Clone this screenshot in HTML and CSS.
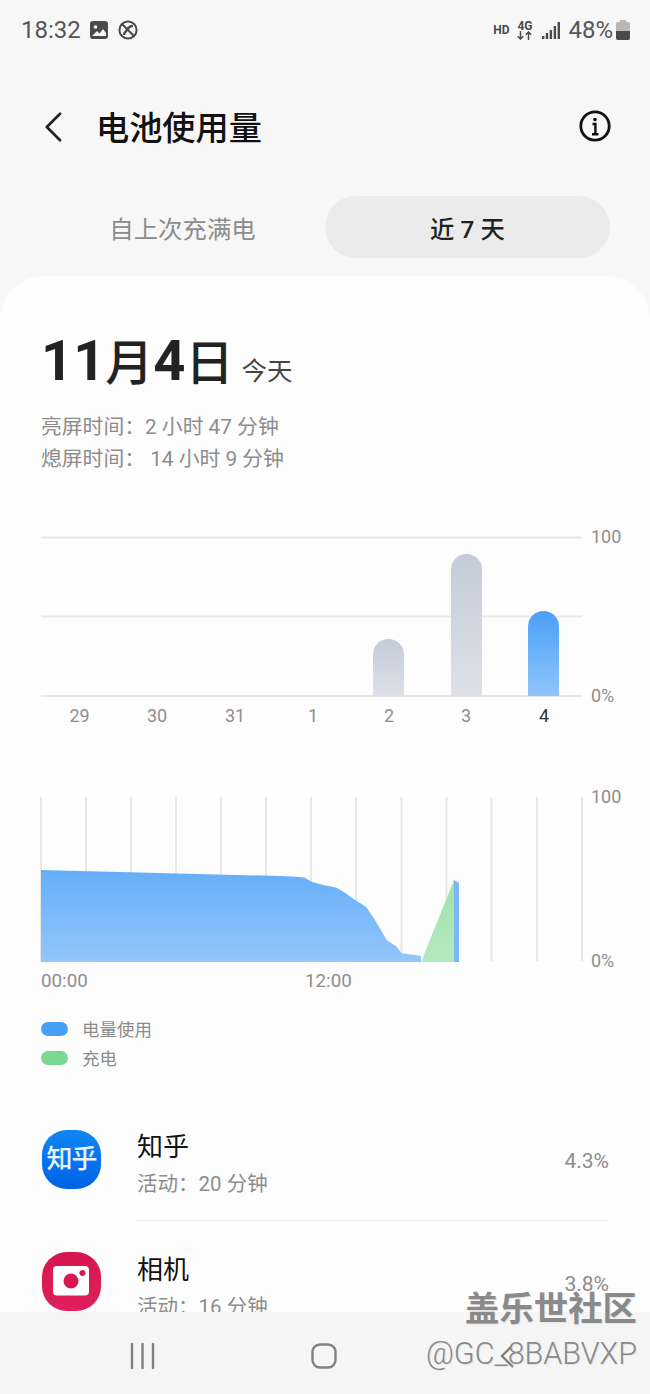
FILE: index.html
```html
<!DOCTYPE html>
<html lang="zh">
<head>
<meta charset="utf-8">
<title>电池使用量</title>
<link rel="stylesheet" href="styles.css">
</head>
<body>
<div class="screen">
  <div class="status">
    <span class="clock">18:32</span>
    <svg class="st-img" viewBox="0 0 18 18"><rect width="18" height="18" rx="3" fill="#4a4a4a"/><circle cx="5.500" cy="6" r="1.800" fill="#f7f7f7"/><path d="M2 15l5-5 2.500 2.500L13 8l3 4v3z" fill="#f7f7f7"/></svg>
    <svg class="st-off" viewBox="0 0 20 20"><circle cx="10" cy="10" r="8.600" fill="none" stroke="#4a4a4a" stroke-width="2"/><path d="M4 4l12 12" stroke="#4a4a4a" stroke-width="2"/><path d="M6 15c0-3 2-3 3-5s3-4 6-4" fill="none" stroke="#4a4a4a" stroke-width="2.400"/></svg>
    <span class="grow"></span>
    <span class="hd">HD</span>
    <span class="net"><span>4G</span><svg viewBox="0 0 15 9"><path d="M3.500 0v8M0.800 5.200l2.700 2.800 2.700-2.800M11.500 9V1M8.800 3.800l2.700-2.800 2.700 2.800" fill="none" stroke="#4a4a4a" stroke-width="1.500"/></svg></span>
    <svg class="signal" viewBox="0 0 18 17"><g fill="#4a4a4a"><rect x="0" y="14" width="2.400" height="3"/><rect x="3.800" y="11" width="2.400" height="6"/><rect x="7.700" y="8" width="2.400" height="9"/><rect x="11.700" y="4" width="2.400" height="13"/><rect x="15.600" y="0" width="2.400" height="17"/></g></svg>
    <span class="pct">48%</span>
    <svg class="battery" viewBox="0 0 14 20"><path d="M4 0h6v2h2a2 2 0 0 1 2 2v14a2 2 0 0 1-2 2H2a2 2 0 0 1-2-2V4a2 2 0 0 1 2-2h2z" fill="#b8b8b8"/><path d="M0 11h14v7a2 2 0 0 1-2 2H2a2 2 0 0 1-2-2z" fill="#4a4a4a"/></svg>
  </div>

  <header class="header">
    <svg class="back" viewBox="0 0 20 34"><path d="M18 2L3 17l15 15" fill="none" stroke="#222" stroke-width="3" stroke-linecap="round" stroke-linejoin="round"/></svg>
    <h1 class="title">电池使用量</h1>
    <svg class="info" viewBox="0 0 32 32"><circle cx="16" cy="16" r="14.200" fill="none" stroke="#111" stroke-width="2.800"/><circle cx="16" cy="9.500" r="1.800" fill="#111"/><path d="M13.500 14h2.900v10M13 24.300h6.500" fill="none" stroke="#111" stroke-width="2.400"/></svg>
  </header>

  <div class="tabs">
    <div class="tab">自上次充满电</div>
    <div class="tab tab-on">近 7 天</div>
  </div>

  <main class="card">
    <div class="date"><b>11</b>月<b>4</b>日<span class="today">今天</span></div>
    <div class="times">
      <div>亮屏时间：2 小时 47 分钟</div>
      <div>熄屏时间： 14 小时 9 分钟</div>
    </div>

    <svg class="chart chart-week" viewBox="0 520 650 210">
      <defs>
        <linearGradient id="grey" x1="0" y1="0" x2="0" y2="1"><stop offset="0" stop-color="#c3ccd9"/><stop offset="1" stop-color="#dde0e7"/></linearGradient>
        <linearGradient id="blue" x1="0" y1="0" x2="0" y2="1"><stop offset="0" stop-color="#4aa0f8"/><stop offset="1" stop-color="#90c5fb"/></linearGradient>
        <linearGradient id="area" gradientUnits="userSpaceOnUse" x1="0" y1="870" x2="0" y2="961"><stop offset="0" stop-color="#65aef8"/><stop offset="1" stop-color="#93c6fb"/></linearGradient>
        <linearGradient id="green" gradientUnits="userSpaceOnUse" x1="0" y1="880" x2="0" y2="961"><stop offset="0" stop-color="#9fe2ac"/><stop offset="1" stop-color="#b6e8bf"/></linearGradient>
      </defs>
      <g class="grid">
        <path d="M41 537.500H582M41 616.500H582M41 696H582"/>
      </g>
      <path d="M373 696V654.500a15.500 15.500 0 0 1 31 0V696z" fill="url(#grey)"/>
      <path d="M451 696V569.500a15.500 15.500 0 0 1 31 0V696z" fill="url(#grey)"/>
      <path d="M528 696V626.500a15.500 15.500 0 0 1 31 0V696z" fill="url(#blue)"/>
      <g class="tick">
        <text x="591" y="543">100</text>
        <text x="591" y="702">0%</text>
      </g>
      <g class="day">
        <text x="79.500" y="722">29</text>
        <text x="157" y="722">30</text>
        <text x="235" y="722">31</text>
        <text x="313" y="722">1</text>
        <text x="389" y="722">2</text>
        <text x="466" y="722">3</text>
        <text x="544" y="722" class="day-on">4</text>
      </g>
    </svg>

    <svg class="chart chart-day" viewBox="0 785 650 210">
      <g class="grid">
        <path d="M41 797V961M86 797V961M131 797V961M176 797V961M221 797V961M266 797V961M311 797V961M356 797V961M401.500 797V961M446.500 797V961M491.500 797V961M537 797V961M582 797V961"/>
      </g>
      <path d="M41 870L280 876L296.700 876.700L305 877.700L311.300 881.700L323.300 885L336.700 887.700L345 892.700L355 900L366 906.700L375 920L386.700 940L396.700 946.700L401.700 953.300L420 955.700L421 955.700V962H41z" fill="url(#area)"/>
      <path d="M421 962L454 880V962z" fill="url(#green)"/>
      <path d="M454 880L459 883V962H454z" fill="#7ab8f5"/>
      <g class="tick">
        <text x="591" y="803">100</text>
        <text x="591" y="967">0%</text>
      </g>
      <g class="time">
        <text x="41" y="987">00:00</text>
        <text x="305" y="987">12:00</text>
      </g>
    </svg>

    <div class="legend">
      <div class="leg-row"><i class="swatch swatch-blue"></i>电量使用</div>
      <div class="leg-row"><i class="swatch swatch-green"></i>充电</div>
    </div>

    <ul class="apps">
      <li class="app">
        <div class="app-icon icon-zhihu">知乎</div>
        <div class="app-body">
          <div class="app-text">
            <div class="app-name">知乎</div>
            <div class="app-sub">活动：20 分钟</div>
          </div>
          <div class="app-pct">4.3%</div>
        </div>
      </li>
      <li class="app">
        <div class="app-icon icon-camera">
          <svg viewBox="0 0 59 59"><rect x="11" y="14" width="36" height="29.500" rx="4" fill="#fff"/><circle cx="29" cy="29" r="7.500" fill="#d8184f"/><circle cx="40.500" cy="21" r="3" fill="#d8184f"/></svg>
        </div>
        <div class="app-body app-body-last">
          <div class="app-text">
            <div class="app-name">相机</div>
            <div class="app-sub">活动：16 分钟</div>
          </div>
          <div class="app-pct">3.8%</div>
        </div>
      </li>
    </ul>
  </main>

  <nav class="nav">
    <svg class="nav-recent" viewBox="0 0 25 26"><path d="M2 0v26M12.500 0v26M23 0v26" stroke="#808080" stroke-width="2.400"/></svg>
    <svg class="nav-home" viewBox="0 0 26 26"><rect x="1.500" y="1.500" width="23" height="23" rx="7.500" fill="none" stroke="#808080" stroke-width="2.400"/></svg>
    <svg class="nav-back" viewBox="0 0 16 26"><path d="M14 2L3 13l11 11" fill="none" stroke="#808080" stroke-width="2.400"/></svg>
  </nav>

  <div class="mark">
    <div class="mark-a">盖乐世社区</div>
    <div class="mark-b">@GC_8BABVXP</div>
  </div>
</div>
</body>
</html>
```
FILE: styles.css
```css
* { box-sizing: border-box; }
html, body { margin: 0; padding: 0; }
body { font-family: Roboto, "Noto Sans CJK SC", sans-serif; background: #f7f7f7; }
.screen { position: relative; width: 650px; height: 1394px; overflow: hidden; background: #f7f7f7; }

.status { display: flex; align-items: center; height: 60px; padding: 0 20px 0 21px; color: #555; }
.clock { font-size: 24px; line-height: 30px; width: 69px; }
.st-img { width: 18px; height: 18px; margin-right: 10px; }
.st-off { width: 20px; height: 20px; }
.grow { flex: 1; }
.hd { font-size: 12px; font-weight: 700; color: #4a4a4a; margin-right: 8px; }
.net { display: flex; flex-direction: column; align-items: center; width: 15px; margin-right: 10px; font-size: 12px; line-height: 10px; font-weight: 700; color: #4a4a4a; }
.net svg { width: 15px; height: 9px; display: block; }
.signal { width: 18px; height: 17px; margin-right: 8px; }
.pct { font-size: 24px; line-height: 30px; margin-right: 3px; }
.battery { width: 14px; height: 20px; }

.header { display: flex; align-items: center; height: 136px; padding: 0 39px 0 44px; }
.back { width: 18px; height: 30px; margin-top: -2px; }
.title { flex: 1; margin: 2px 0 0 34px; font-size: 33.200px; line-height: 44px; font-weight: 500; color: #111; }
.info { width: 32px; height: 32px; margin-top: -4px; }

.tabs { display: grid; grid-template-columns: 1fr 1fr; height: 62px; margin: 0 40px; }
.tab { display: flex; align-items: center; justify-content: center; font-size: 24.400px; color: #8c8c8c; }
.tab-on { background: #ebebeb; border-radius: 31px; color: #222; font-weight: 500; }

.card { height: 1100px; margin-top: 18px; padding-top: 55px; background: #fdfdfd; border-radius: 44px 44px 0 0; }
.date { display: flex; align-items: baseline; height: 60px; padding-left: 41px; font-size: 48px; line-height: 60px; font-weight: 500; color: #222; }
.date b { font-size: 56px; font-weight: 700; }
.today { margin-left: 8px; font-size: 25.500px; line-height: 58px; font-weight: 400; color: #444; }
.times { margin-top: 21px; padding-left: 41px; font-size: 20.800px; line-height: 31.500px; color: #8c8c8c; }

.chart { display: block; width: 650px; height: 210px; }
.chart-week { margin-top: 45px; }
.chart-day { margin-top: 55px; }
.grid path { stroke: #e8e8e8; stroke-width: 2; fill: none; }
.tick text { font-size: 18px; fill: #8e8e8e; }
.time text { font-size: 18.800px; fill: #8e8e8e; }
.day text { font-size: 18px; fill: #8e8e8e; text-anchor: middle; }
.day .day-on { fill: #333; }

.legend { margin-top: 19px; font-size: 17.500px; color: #8c8c8c; }
.leg-row { display: flex; align-items: center; height: 29px; padding-left: 41px; }
.swatch { width: 27px; height: 14px; margin-right: 14px; border-radius: 7px; }
.swatch-blue { background: #46a0f7; }
.swatch-green { background: #7ad98f; }

.apps { list-style: none; margin: 26px 0 0; padding: 0; }
.app { display: flex; padding-left: 42px; }
.app-icon { flex: none; width: 59px; height: 59px; margin: 32px 36px 0 0; border-radius: 42%; }
.app + .app .app-icon { margin-top: 31px; }
.icon-zhihu { display: flex; align-items: center; justify-content: center; background: linear-gradient(#0f86f5, #0062e6); color: #e8f3ff; font-size: 26px; line-height: 59px; letter-spacing: -1px; font-weight: 500; }
.icon-camera { background: linear-gradient(#d5174d, #e01f5c); }
.icon-camera svg { display: block; width: 59px; height: 59px; }
.app-body { flex: 1; display: flex; align-items: center; justify-content: space-between; margin-right: 41px; padding: 31px 0 17px; border-bottom: 1px solid #ececec; }
.app-body-last { border-bottom: 0; }
.app-name { font-size: 26px; line-height: 36px; color: #111; }
.app-sub { font-size: 20.500px; line-height: 38px; color: #8c8c8c; }
.app-pct { margin-bottom: 10px; font-size: 21px; color: #8c8c8c; }

.nav { position: absolute; left: 0; right: 0; bottom: 0; height: 82px; background: #f5f5f5; }
.nav-recent { position: absolute; left: 130px; top: 31px; width: 25px; height: 26px; }
.nav-home { position: absolute; left: 311px; top: 31px; width: 26px; height: 26px; }
.nav-back { position: absolute; left: 499px; top: 31px; width: 16px; height: 26px; }

.mark { position: absolute; right: 13px; top: 1289px; text-align: right; color: #8a8a8a; text-shadow: 1px 1px 0 #e4e4e4; }
.mark-a { font-size: 34.400px; line-height: 40px; font-weight: 700; }
.mark-b { font-size: 30.500px; line-height: 36px; margin-top: 7px; font-weight: 300; }
```
